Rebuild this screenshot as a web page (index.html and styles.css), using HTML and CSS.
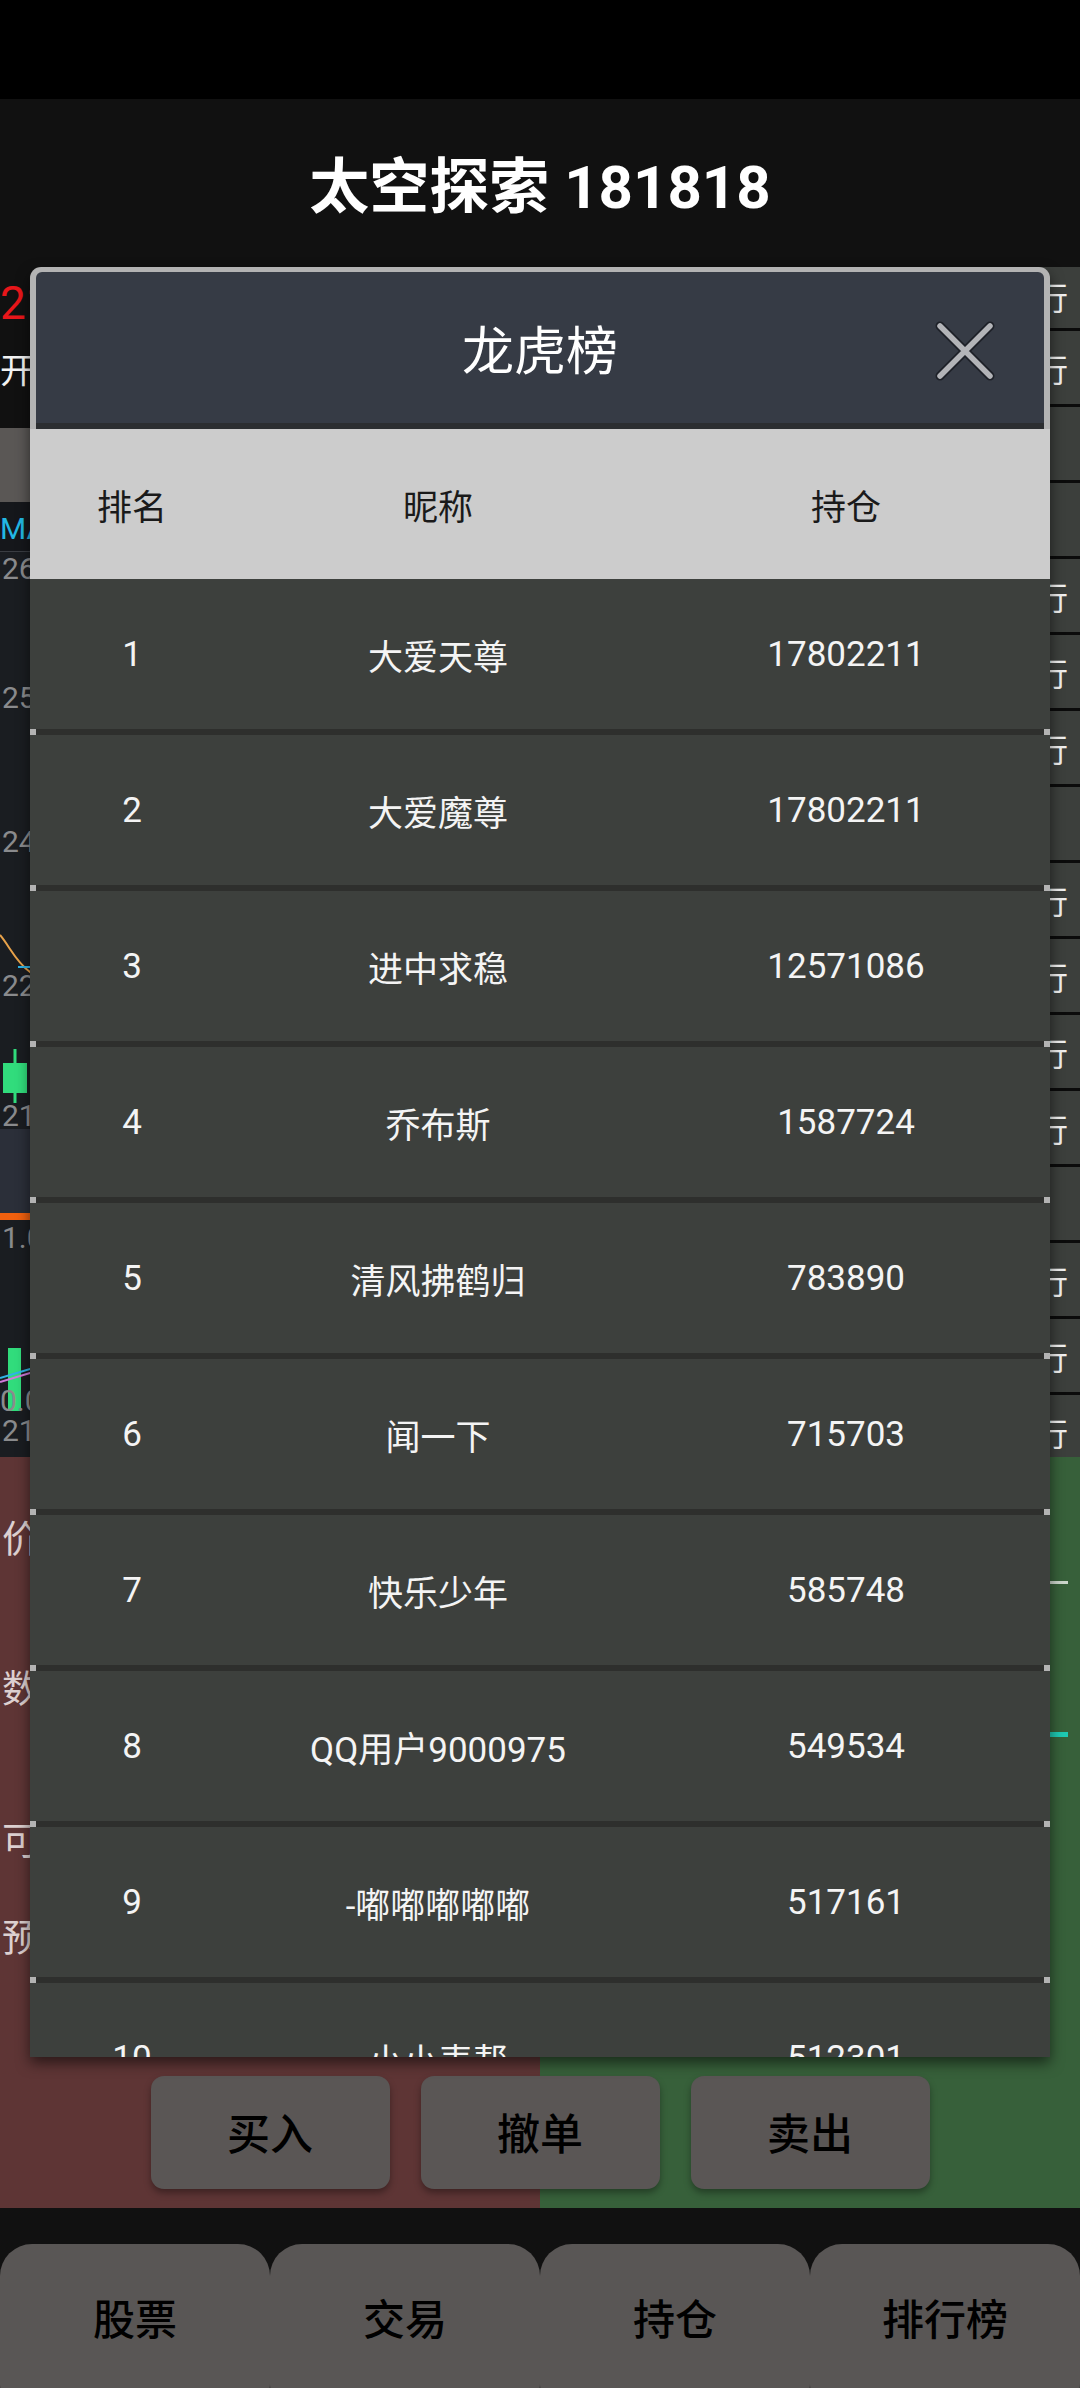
FILE: index.html
```html
<!DOCTYPE html>
<html lang="zh-CN">
<head>
<meta charset="utf-8">
<title>太空探索 181818</title>
<link rel="stylesheet" href="styles.css">
</head>
<body>
<div class="screen">
  <div class="statusbar"></div>
  <header class="appbar"><h1 class="appbar-title">太空探索 181818</h1></header>

  <main class="market">
    <section class="quote">
      <div class="chart-col">
        <div class="price-info">
          <div class="price">21.36</div>
          <div class="open">开 21.80</div>
        </div>
        <div class="period-row"><div class="period-btn"></div></div>
        <div class="ma-row">MA5 21.62</div>
        <svg class="kline" width="780" height="577" viewBox="0 0 780 577">
          <rect width="780" height="577" fill="#1a1d21"/>
          <path d="M0 383 C10 395 16 410 30 420 L60 430" fill="none" stroke="#e8a24a" stroke-width="2"/>
          <path d="M18 415 L80 415" fill="none" stroke="#2fb4e6" stroke-width="2"/>
          <line x1="15" y1="497" x2="15" y2="551" stroke="#31dc7c" stroke-width="3"/>
          <rect x="3" y="511" width="24" height="30" fill="#31dc7c"/>
          <text x="2" y="27" class="axis">26.00</text>
          <text x="2" y="156" class="axis">25.00</text>
          <text x="2" y="300" class="axis">24.00</text>
          <text x="2" y="444" class="axis">22.00</text>
          <text x="2" y="574" class="axis">21.00</text>
        </svg>
        <div class="sub-bar"></div>
        <div class="orange-line"></div>
        <svg class="vol" width="780" height="237" viewBox="0 0 780 237">
          <rect width="780" height="237" fill="#1a1d21"/>
          <text x="2" y="28" class="axis">1.06万</text>
          <rect x="8" y="128" width="13" height="63" fill="#31dc7c"/>
          <path d="M0 162 L40 150" fill="none" stroke="#d07ad8" stroke-width="2"/>
          <path d="M0 158 L40 146" fill="none" stroke="#2fb4e6" stroke-width="2"/>
          <text x="0" y="191" class="axis">0.00</text>
          <text x="2" y="221" class="axis">21</text>
        </svg>
      </div>
      <div class="side-list">
        <div class="side-cell first"><span>银行</span></div>
        <div class="side-cell"><span>银行</span></div>
        <div class="side-cell"></div>
        <div class="side-cell"></div>
        <div class="side-cell"><span>执行</span></div>
        <div class="side-cell"><span>执行</span></div>
        <div class="side-cell"><span>银行</span></div>
        <div class="side-cell"></div>
        <div class="side-cell"><span>银行</span></div>
        <div class="side-cell"><span>银行</span></div>
        <div class="side-cell"><span>银行</span></div>
        <div class="side-cell"><span>执行</span></div>
        <div class="side-cell"></div>
        <div class="side-cell"><span>银行</span></div>
        <div class="side-cell"><span>执行</span></div>
        <div class="side-cell"><span>银行</span></div>
      </div>
    </section>

    <section class="trade">
      <div class="trade-panels">
        <div class="buy-panel">
          <div class="field-label l1">价格</div>
          <div class="field-label l2">数量</div>
          <div class="field-label l3">可用</div>
          <div class="field-label l4">预计</div>
        </div>
        <div class="sell-panel">
          <div class="underline grey"></div>
          <div class="underline cyan"></div>
        </div>
      </div>
      <div class="actions">
        <button class="action-btn">买入</button>
        <button class="action-btn">撤单</button>
        <button class="action-btn">卖出</button>
      </div>
    </section>
  </main>

  <nav class="tabbar">
    <div class="tab">股票</div>
    <div class="tab">交易</div>
    <div class="tab">持仓</div>
    <div class="tab">排行榜</div>
  </nav>

  <div class="dialog">
    <div class="dlg-head">
      <div class="dlg-title">龙虎榜</div>
      <svg class="dlg-close" width="60" height="60" viewBox="0 0 60 60">
        <path d="M5 5 L55 55 M55 5 L5 55" stroke="#1e2128" stroke-width="9" stroke-linecap="round"/>
        <path d="M5 5 L55 55 M55 5 L5 55" stroke="#b3b4b8" stroke-width="5.5" stroke-linecap="round"/>
      </svg>
    </div>
    <div class="dlg-strip"></div>
    <div class="col-head">
      <div>排名</div><div>昵称</div><div>持仓</div>
    </div>
    <div class="rank-list">
      <div class="rank-row"><div>1</div><div>大爱天尊</div><div>17802211</div></div>
      <div class="rank-sep"></div>
      <div class="rank-row"><div>2</div><div>大爱魔尊</div><div>17802211</div></div>
      <div class="rank-sep"></div>
      <div class="rank-row"><div>3</div><div>进中求稳</div><div>12571086</div></div>
      <div class="rank-sep"></div>
      <div class="rank-row"><div>4</div><div>乔布斯</div><div>1587724</div></div>
      <div class="rank-sep"></div>
      <div class="rank-row"><div>5</div><div>清风拂鹤归</div><div>783890</div></div>
      <div class="rank-sep"></div>
      <div class="rank-row"><div>6</div><div>闻一下</div><div>715703</div></div>
      <div class="rank-sep"></div>
      <div class="rank-row"><div>7</div><div>快乐少年</div><div>585748</div></div>
      <div class="rank-sep"></div>
      <div class="rank-row"><div>8</div><div>QQ用户9000975</div><div>549534</div></div>
      <div class="rank-sep"></div>
      <div class="rank-row"><div>9</div><div>-嘟嘟嘟嘟嘟</div><div>517161</div></div>
      <div class="rank-sep"></div>
      <div class="rank-row"><div>10</div><div>小小表帮</div><div>512301</div></div>
      <div class="rank-sep"></div>
    </div>
  </div>
</div>
</body>
</html>
```

FILE: styles.css
```css
html, body {
  margin: 0;
  padding: 0;
  background: #111111;
}
body {
  font-family: "Roboto", "Noto Sans CJK SC", sans-serif;
  width: 1080px;
  height: 2388px;
  overflow: hidden;
}
.screen {
  position: relative;
  width: 1080px;
  height: 2388px;
  overflow: hidden;
  display: flex;
  flex-direction: column;
}
.statusbar {
  height: 99px;
  background: #000;
  flex: none;
}
.appbar {
  height: 168px;
  flex: none;
  background: #111111;
  display: flex;
  justify-content: center;
  align-items: center;
}
.appbar-title {
  margin: 0 0 4px 0;
  color: #fff;
  font-size: 60px;
  font-weight: 700;
  font-family: "Roboto", "Noto Sans CJK SC", sans-serif;
  letter-spacing: 0;
}

/* ---------- market area ---------- */
.market {
  flex: none;
  display: flex;
  flex-direction: column;
}
.quote {
  height: 1190px;
  display: flex;
  overflow: hidden;
}
.chart-col {
  width: 780px;
  display: flex;
  flex-direction: column;
  background: #111;
}
.price-info {
  height: 161px;
  padding-left: 0;
  box-sizing: border-box;
  padding-top: 8px;
}
.price {
  color: #e8161a;
  font-size: 46px;
  line-height: 56px;
}
.open {
  color: #f2f2f2;
  font-size: 34px;
  line-height: 40px;
  margin-top: 20px;
}
.period-row {
  height: 74px;
}
.period-btn {
  width: 220px;
  height: 74px;
  background: #5a5755;
  border-radius: 0 16px 16px 0;
}
.ma-row {
  height: 50px;
  box-sizing: border-box;
  border-bottom: 1px solid #3a3d42;
  color: #22b8e4;
  font-size: 30px;
  line-height: 46px;
  padding-top: 4px;
  background: #15171b;
}
.kline, .vol {
  display: block;
  flex: none;
}
.axis {
  fill: #8a8b8d;
  font-size: 30px;
  font-family: "Roboto", sans-serif;
}
.sub-bar {
  height: 84px;
  background: #2b2f39;
}
.orange-line {
  height: 7px;
  background: #f0600f;
}
.side-list {
  width: 300px;
  background: #3c3f3c;
  display: flex;
  flex-direction: column;
}
.side-cell {
  flex: none;
  height: 76px;
  box-sizing: border-box;
  border-top: 3px solid #0b0b0b;
  display: flex;
  justify-content: flex-end;
  align-items: center;
  padding-right: 12px;
  color: #f0f0f0;
  font-size: 32px;
}
.side-cell.first {
  height: 61px;
  border-top: none;
  align-items: flex-start;
  padding-top: 6px;
}

/* ---------- trade panels ---------- */
.trade {
  height: 751px;
  background: linear-gradient(to right, #5e3535 0, #5e3535 540px, #37603a 540px, #37603a 100%);
  display: flex;
  flex-direction: column;
}
.trade-panels {
  flex: 1;
  display: flex;
}
.buy-panel, .sell-panel {
  width: 540px;
  display: flex;
  flex-direction: column;
}
.field-label {
  color: #ddd0d0;
  font-size: 38px;
  line-height: 40px;
  padding-left: 2px;
}
.l1 { margin-top: 62px; }
.l2 { margin-top: 110px; }
.l3 { margin-top: 112px; }
.l4 { margin-top: 57px; }
.sell-panel {
  align-items: flex-end;
}
.underline {
  width: 420px;
  margin-right: 12px;
}
.underline.grey {
  height: 3px;
  background: #cbd6cb;
  margin-top: 124px;
}
.underline.cyan {
  height: 5px;
  background: #1ec9b2;
  margin-top: 148px;
}
.actions {
  display: flex;
  justify-content: center;
  gap: 31px;
  padding-bottom: 19px;
}
.action-btn {
  width: 239px;
  height: 113px;
  border: none;
  border-radius: 13px;
  background: #5a5655;
  color: #000;
  font-family: "Roboto", "Noto Sans CJK SC", sans-serif;
  font-size: 43px;
  font-weight: 500;
  box-shadow: 0 4px 7px rgba(0, 0, 0, 0.35);
  padding: 0 0 4px 0;
}

/* ---------- bottom tab bar ---------- */
.tabbar {
  margin-top: 36px;
  height: 144px;
  display: flex;
  overflow: hidden;
  flex: none;
}
.tab {
  width: 270px;
  height: 172px;
  flex: none;
  background: #595655;
  border-radius: 32px;
  box-sizing: border-box;
  padding-bottom: 28px;
  display: flex;
  justify-content: center;
  align-items: center;
  color: #000;
  font-size: 42px;
  font-weight: 500;
}

/* ---------- leaderboard dialog (overlay) ---------- */
.dialog {
  position: absolute;
  top: 267px;
  left: 30px;
  width: 1020px;
  height: 1790px;
  background: #b3b3b3;
  border-radius: 11px 11px 0 0;
  overflow: hidden;
  box-shadow: 0 6px 14px rgba(0, 0, 0, 0.55);
  display: flex;
  flex-direction: column;
}
.dlg-head {
  flex: none;
  margin: 5px 6px 0 6px;
  height: 151px;
  background: #363b45;
  border-radius: 6px 6px 0 0;
  display: flex;
  align-items: center;
  justify-content: center;
  position: relative;
}
.dlg-title {
  color: #fff;
  font-size: 52px;
  line-height: 60px;
  margin-top: 10px;
}
.dlg-close {
  position: absolute;
  right: 49px;
  top: 49px;
}
.dlg-strip {
  flex: none;
  height: 6px;
  margin: 0 6px;
  background: #2c2e31;
}
.col-head {
  flex: none;
  height: 150px;
  background: #cccccc;
  display: grid;
  grid-template-columns: 1fr 2fr 2fr;
  align-items: center;
  color: #1a1a1a;
  font-size: 35px;
  text-align: center;
}
.rank-list {
  flex: 1;
  overflow: hidden;
}
.rank-row {
  height: 150px;
  background: #3d403d;
  display: grid;
  grid-template-columns: 1fr 2fr 2fr;
  align-items: center;
  text-align: center;
  color: #f4f4f4;
  font-size: 35px;
}
.rank-sep {
  height: 6px;
  margin: 0 6px;
  background: #2e2f2d;
}
```
